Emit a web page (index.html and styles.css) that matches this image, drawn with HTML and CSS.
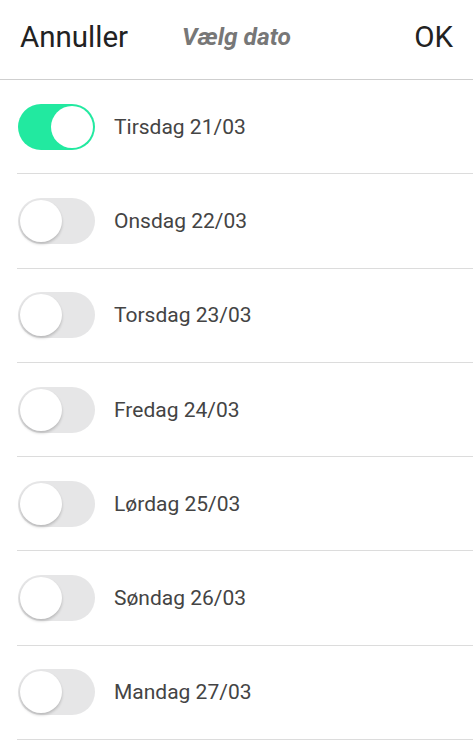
FILE: index.html
```html
<!DOCTYPE html>
<html lang="da">
<head>
    <meta charset="UTF-8">
    <meta name="viewport" content="width=device-width, initial-scale=1.0">
    <title>Vælg dato</title>
    <link rel="stylesheet" href="styles.css">
</head>
<body>
    <div class="header">
        <span class="btn-text">Annuller</span>
        <span class="title">Vælg dato</span>
        <span class="btn-text ok">OK</span>
    </div>
    <ul class="day-list">
        <li class="day"><span class="toggle on"><span class="knob"></span></span><span class="label">Tirsdag 21/03</span></li>
        <li class="day"><span class="toggle"><span class="knob"></span></span><span class="label">Onsdag 22/03</span></li>
        <li class="day"><span class="toggle"><span class="knob"></span></span><span class="label">Torsdag 23/03</span></li>
        <li class="day"><span class="toggle"><span class="knob"></span></span><span class="label">Fredag 24/03</span></li>
        <li class="day"><span class="toggle"><span class="knob"></span></span><span class="label">Lørdag 25/03</span></li>
        <li class="day"><span class="toggle"><span class="knob"></span></span><span class="label">Søndag 26/03</span></li>
        <li class="day"><span class="toggle"><span class="knob"></span></span><span class="label">Mandag 27/03</span></li>
    </ul>
</body>
</html>
```

FILE: styles.css
```css
body {
    margin: 0;
    font-family: Roboto, "Noto Sans", sans-serif;
    background-color: #fff;
    color: #222;
}
.header {
    display: flex;
    align-items: center;
    height: 80px;
    box-sizing: border-box;
    padding: 0 20px 6px 20px;
    border-bottom: 1px solid #cfcfcf;
}
.btn-text {
    font-size: 29.5px;
    color: #222;
}
.title {
    margin-left: 54px;
    font-size: 24.5px;
    font-weight: bold;
    font-style: italic;
    color: #777;
}
.ok {
    margin-left: auto;
}
.day-list {
    list-style: none;
    margin: 0;
    padding: 0 0 0 17px;
}
.day {
    display: flex;
    align-items: center;
    height: 94.3px;
    box-sizing: border-box;
    border-bottom: 1px solid #dcdcdc;
}
.toggle {
    position: relative;
    width: 77px;
    height: 46px;
    margin-left: 1px;
    border-radius: 23px;
    background-color: #e6e6e7;
    flex-shrink: 0;
}
.toggle .knob {
    position: absolute;
    top: 2px;
    left: 2px;
    width: 42px;
    height: 42px;
    border-radius: 50%;
    background-color: #fff;
    box-shadow: 0 2px 3px rgba(0, 0, 0, 0.2);
}
.toggle.on {
    background-color: #22e9a0;
}
.toggle.on .knob {
    left: 33px;
    box-shadow: none;
}
.label {
    margin-left: 19px;
    font-size: 21px;
    color: #444;
}
```
